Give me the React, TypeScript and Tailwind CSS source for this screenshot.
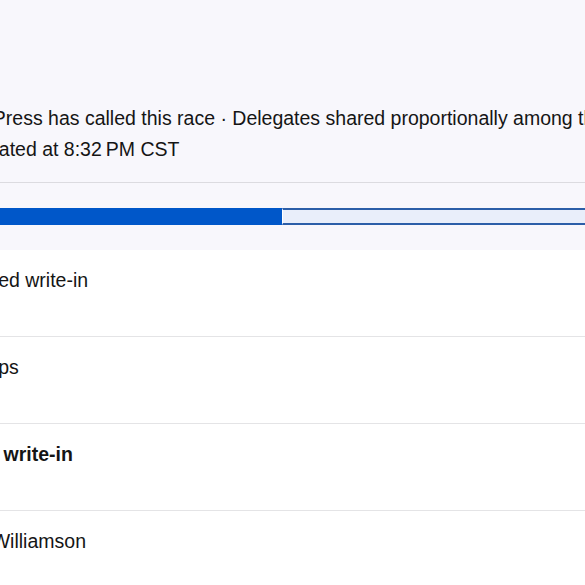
const rows = [
  { name: "Uncommitted write-in", bold: false },
  { name: "Dean Phillips", bold: false },
  { name: "Joe Biden write-in", bold: true },
  { name: "Marianne Williamson", bold: false },
];

export default function App() {
  return (
    <div className="min-h-screen w-full overflow-hidden bg-white font-['Liberation_Sans',Arial,sans-serif] text-[19.5px] text-[#151515]">
      <section className="h-[250px] bg-[#f8f7fc] pt-[103px]">
        <div className="whitespace-nowrap leading-[31px]">
          <p className="-ml-[108px]">
            Associated Press has called this race · Delegates shared proportionally among the candidates
          </p>
          <p className="-ml-[76px]">Last updated at 8:32{"\u2009"}PM CST</p>
        </div>
        <div className="mt-[17px] h-px bg-[#dcdbe0]" />
        <div className="mt-[25px] flex h-[17px]">
          <div className="w-[282px] bg-[#0057c9]" />
          <div className="flex-1 border-y-2 border-l border-y-[#2c5ea8] border-l-white bg-[#e9eefa]" />
        </div>
      </section>
      <ul>
        {rows.map((r) => (
          <li key={r.name} className="h-[87px] border-b border-[#e4e4e6] pt-[15px]">
            <span
              className={
                r.bold
                  ? "-ml-[95px] block whitespace-nowrap font-bold leading-[31px]"
                  : "-ml-[95px] block whitespace-nowrap leading-[31px]"
              }
            >
              {r.name}
            </span>
          </li>
        ))}
      </ul>
    </div>
  );
}
